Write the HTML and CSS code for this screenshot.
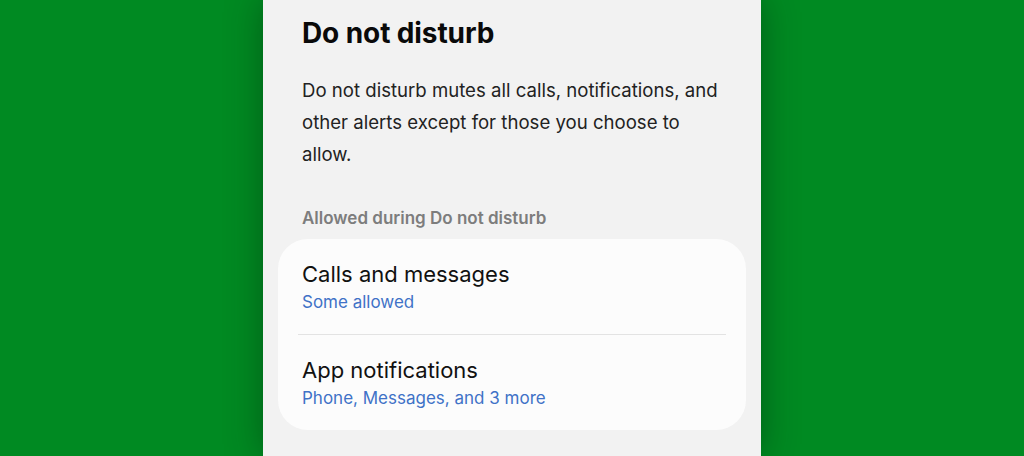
FILE: index.html
```html
<!DOCTYPE html>
<html lang="en">
<head>
    <meta charset="UTF-8">
    <title>Do not disturb</title>
    <link rel="stylesheet" href="styles.css">
</head>
<body>
    <div class="screen">
        <h1>Do not disturb</h1>
        <p class="intro">Do not disturb mutes all calls, notifications, and other alerts except for those you choose to allow.</p>

        <div class="section-title">Allowed during Do not disturb</div>
        <div class="card">
            <div class="item">
                <div class="item-title">Calls and messages</div>
                <div class="item-sub">Some allowed</div>
            </div>
            <div class="divider"></div>
            <div class="item">
                <div class="item-title">App notifications</div>
                <div class="item-sub">Phone, Messages, and 3 more</div>
            </div>
        </div>
    </div>
</body>
</html>
```

FILE: styles.css
```css
html, body {
    height: 100%;
}

body {
    margin: 0;
    background: #008a22;
    font-family: 'Inter', 'Noto Sans', sans-serif;
    color: #111;
    overflow: hidden;
}

.screen {
    width: 498px;
    height: 100%;
    margin-left: 263px;
    background: #f2f2f2;
    box-sizing: border-box;
    padding: 14px 15px 0 15px;
    box-shadow: 0 0 34px rgba(0, 40, 10, 0.45);
}

h1 {
    margin: 0 0 0 24px;
    font-size: 28px;
    font-weight: 700;
    line-height: 38px;
    color: #0a0a0a;
    letter-spacing: -0.1px;
}

.intro {
    margin: 22px 0 0 24px;
    width: 420px;
    font-size: 18.6px;
    line-height: 32px;
    color: #222;
}

.section-title {
    margin: 37px 0 0 24px;
    font-size: 17px;
    font-weight: 600;
    color: #7d7d7d;
    line-height: 22px;
}

.card {
    margin-top: 10px;
    background: #fcfcfc;
    border-radius: 30px;
    padding: 0 20px;
}

.item {
    padding: 20px 4px 19px 4px;
}

.item-title {
    font-size: 22px;
    line-height: 30px;
    color: #111;
}

.item-sub {
    font-size: 17px;
    line-height: 26px;
    color: #3f72c7;
}

.divider {
    height: 1px;
    background: #e3e3e3;
}
```
